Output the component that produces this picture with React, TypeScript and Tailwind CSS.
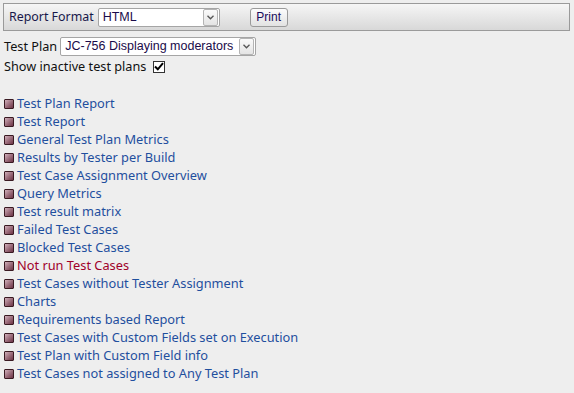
import React from "react";

const items: { label: string; red?: boolean }[] = [
  { label: "Test Plan Report" },
  { label: "Test Report" },
  { label: "General Test Plan Metrics" },
  { label: "Results by Tester per Build" },
  { label: "Test Case Assignment Overview" },
  { label: "Query Metrics" },
  { label: "Test result matrix" },
  { label: "Failed Test Cases" },
  { label: "Blocked Test Cases" },
  { label: "Not run Test Cases", red: true },
  { label: "Test Cases without Tester Assignment" },
  { label: "Charts" },
  { label: "Requirements based Report" },
  { label: "Test Cases with Custom Fields set on Execution" },
  { label: "Test Plan with Custom Field info" },
  { label: "Test Cases not assigned to Any Test Plan" },
];

function Chevron() {
  return (
    <div className="h-[17px] w-[15px] border border-[#b4b4b4] rounded-[2px] bg-gradient-to-b from-[#fafafa] to-[#e4e4e4] flex items-center justify-center shrink-0">
      <svg width="7" height="5" viewBox="0 0 7 5">
        <path d="M0.5 0.8 L3.5 3.8 L6.5 0.8" fill="none" stroke="#555" strokeWidth="1.3" />
      </svg>
    </div>
  );
}

function Select({ text, width }: { text: string; width: string }) {
  return (
    <div
      className={`${width} h-[19px] border border-[#a5a5a5] rounded-[2px] bg-white flex items-center justify-between pl-[4px] pr-[1px] text-[12.5px] text-[#1a0b4a] shrink-0`}
      style={{ fontFamily: "'Liberation Sans', sans-serif" }}
    >
      <span className="leading-none whitespace-nowrap">{text}</span>
      <Chevron />
    </div>
  );
}

export default function App() {
  return (
    <div
      className="w-[574px] h-[393px] bg-[#eeeeee] pt-[3px] px-[3px] text-[12.7px]"
      style={{ fontFamily: "'Noto Sans', 'Open Sans', sans-serif" }}
    >
      <div className="w-[567px] h-[28px] border border-[#9a9a9a] bg-gradient-to-b from-[#f6f6f6] to-[#d8d8d8] flex items-center pl-[5px]">
        <span className="text-[12.4px] text-[#18184a] mr-[4px] whitespace-nowrap">Report Format</span>
        <Select text="HTML" width="w-[122px]" />
        <div className="ml-[30px] h-[19px] w-[38px] border border-[#9a9a9a] rounded-[3px] bg-gradient-to-b from-[#fcfcfc] to-[#e2e2e2] flex items-center justify-center text-[12px] text-[#1a0b5a]"
          style={{ fontFamily: "'Liberation Sans', sans-serif" }}>
          Print
        </div>
      </div>
      <div className="flex items-center mt-[6px] pl-[1px] h-[19px]">
        <span className="text-[12.7px] text-[#111] mr-[3px] whitespace-nowrap">Test Plan</span>
        <Select text="JC-756 Displaying moderators" width="w-[196px]" />
      </div>
      <div className="flex items-center mt-[2px] pl-[1px] h-[17px]">
        <span className="text-[12.7px] text-[#111] whitespace-nowrap">Show inactive test plans</span>
        <div className="ml-[7px] w-[12px] h-[12px] border border-[#333] bg-white flex items-center justify-center">
          <svg width="10" height="9" viewBox="0 0 10 9">
            <path d="M1 4.5 L3.8 7.3 L9 1.2" fill="none" stroke="#000" strokeWidth="2" />
          </svg>
        </div>
      </div>
      <div className="mt-[20px] flex flex-col">
        {items.map((it) => (
          <div key={it.label} className="flex items-center h-[18px]">
            <div className="ml-[1px] w-[10px] h-[10px] border border-[#3a1a22] rounded-[1px] bg-gradient-to-br from-[#d0b0bb] to-[#6b3346] mr-[3px]" />
            <span className={`text-[12.8px] whitespace-nowrap ${it.red ? "text-[#a0002a]" : "text-[#1f4f9e]"}`}>{it.label}</span>
          </div>
        ))}
      </div>
    </div>
  );
}
